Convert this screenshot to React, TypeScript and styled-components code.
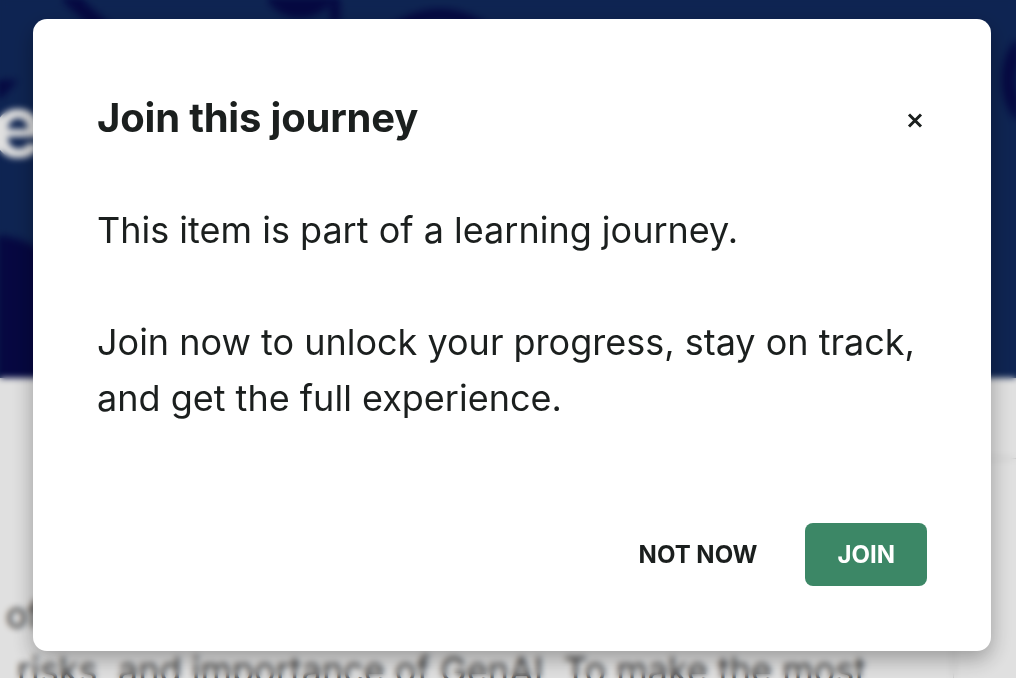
import React from "react";
import styled, { createGlobalStyle } from "styled-components";

const GlobalStyle = createGlobalStyle`
	html, body {
		margin: 0;
		padding: 0;
		background: #ffffff;
		overflow: hidden;
	}
	* {
		box-sizing: border-box;
	}
`;

const Page = styled.div`
	width: 1016px;
	height: 678px;
	overflow: hidden;
	font-family: Inter, "Noto Sans", sans-serif;
`;

const Hero = styled.section`
	position: relative;
	height: 378px;
	background: #112a5e;
	overflow: hidden;
	padding-top: 76px;
`;

const HeroShapes = styled.svg`
	position: absolute;
	inset: 0;
	filter: blur(2px);
`;

const HeroTitle = styled.h1`
	position: relative;
	margin: 0;
	text-indent: -8px;
	font-size: 86px;
	line-height: 100px;
	font-weight: 700;
	color: #ffffff;
	white-space: nowrap;
`;

const Body = styled.section`
	display: flex;
	height: 300px;
`;

const Article = styled.div`
	flex: 1;
	padding: 210px 0 0 6px;
	color: #3a3a3a;
	font-size: 36px;
	line-height: 55px;
`;

const Line = styled.div<{ $indent?: number }>`
	white-space: nowrap;
	padding-left: ${(p) => p.$indent ?? 0}px;
`;

const Aside = styled.aside`
	width: 63px;
	margin-top: 80px;
	border-left: 1px solid #d4d4d4;
	border-top: 1px solid #d4d4d4;
`;

const Overlay = styled.div`
	position: fixed;
	inset: 0;
	display: flex;
	align-items: flex-start;
	padding: 19px 0 0 33px;
	background: rgba(0, 0, 0, 0.12);
	backdrop-filter: blur(3px);
`;

const Dialog = styled.div`
	width: 958px;
	height: 632px;
	padding: 64px;
	background: #ffffff;
	border-radius: 14px;
	box-shadow: 0 8px 22px rgba(0, 0, 0, 0.32);
	color: #1b1f1e;
`;

const Header = styled.div`
	display: flex;
	align-items: center;
	justify-content: space-between;
	margin-top: 11px;
`;

const Title = styled.h2`
	margin: 0;
	font-size: 40px;
	line-height: 48px;
	font-weight: 700;
	letter-spacing: -0.2px;
`;

const CloseButton = styled.button`
	display: flex;
	align-items: center;
	justify-content: center;
	width: 24px;
	height: 24px;
	margin-top: 5px;
	padding: 0;
	border: none;
	background: none;
	color: #1b1f1e;
	cursor: pointer;
`;

const Text = styled.div`
	margin-top: 60px;
	font-size: 36px;
	line-height: 56px;
	font-weight: 400;
`;

const Paragraph = styled.p`
	margin: 0 0 56px;
	&:last-child {
		margin-bottom: 0;
	}
`;

const Footer = styled.div`
	display: flex;
	justify-content: flex-end;
	gap: 16px;
	margin-top: 97px;
`;

const Button = styled.button<{ $primary?: boolean }>`
	padding: 16px 32px;
	border: none;
	border-radius: 8px;
	font-family: Inter, "Noto Sans", sans-serif;
	font-size: 24px;
	line-height: 31px;
	font-weight: 700;
	text-transform: uppercase;
	background: ${(p) => (p.$primary ? "#3c8766" : "transparent")};
	color: ${(p) => (p.$primary ? "#ffffff" : "#1b1f1e")};
	cursor: pointer;
`;

const CloseIcon = () => (
	<svg width="16" height="17" viewBox="0 0 16 17" fill="none">
		<path
			d="M2 2.5L14 14.5M14 2.5L2 14.5"
			stroke="currentColor"
			strokeWidth="3"
			strokeLinecap="butt"
		/>
	</svg>
);

const App: React.FC = () => {
	return (
		<Page>
			<GlobalStyle />
			<Hero>
				<HeroShapes width="1016" height="378" viewBox="0 0 1016 378">
					<path d="M60 -10 L140 60" stroke="#06094a" strokeWidth="14" />
					<circle cx="300" cy="-22" r="40" fill="#06094a" />
					<rect x="330" y="0" width="10" height="22" fill="#06094a" />
					<circle cx="440" cy="90" r="75" stroke="#06094a" strokeWidth="12" fill="none" />
					<circle cx="-10" cy="330" r="95" fill="#07094a" />
					<circle cx="1070" cy="80" r="62" stroke="#06094a" strokeWidth="12" fill="none" />
					<path d="M0 80 L18 80 L0 100 Z" fill="#06094a" />
				</HeroShapes>
				<HeroTitle>eeper learning</HeroTitle>
			</Hero>
			<Body>
				<Article>
					<Line>of generative AI fundamentals</Line>
					<Line $indent={11}>risks, and importance of GenAI. To make the most</Line>
				</Article>
				<Aside />
			</Body>
			<Overlay>
				<Dialog role="dialog" aria-labelledby="join-title">
					<Header>
						<Title id="join-title">Join this journey</Title>
						<CloseButton aria-label="Close">
							<CloseIcon />
						</CloseButton>
					</Header>
					<Text>
						<Paragraph>This item is part of a learning journey.</Paragraph>
						<Paragraph>
							Join now to unlock your progress, stay on track,
							<br />
							and get the full experience.
						</Paragraph>
					</Text>
					<Footer>
						<Button>Not now</Button>
						<Button $primary>Join</Button>
					</Footer>
				</Dialog>
			</Overlay>
		</Page>
	);
};

export default App;
